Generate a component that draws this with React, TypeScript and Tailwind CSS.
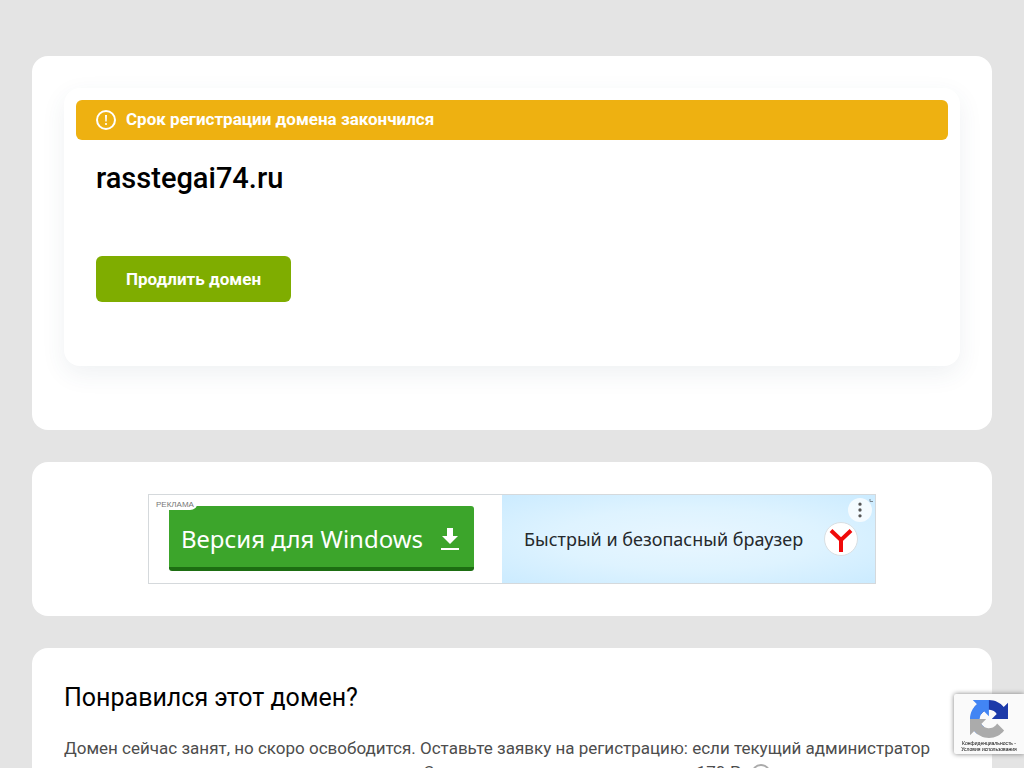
import { MoreVertical } from "lucide-react";

function AlertIcon() {
  return (
    <svg className="w-5 h-5 shrink-0" viewBox="0 0 20 20" fill="none" aria-hidden="true">
      <circle cx="10" cy="10" r="9" stroke="#fff" strokeWidth="2" />
      <path d="M9 5h2l-.3 6.5H9.3z" fill="#fff" />
      <circle cx="10" cy="14" r="1.1" fill="#fff" />
    </svg>
  );
}

function DomainCard() {
  return (
    <section className="bg-white rounded-2xl px-8 pt-8 pb-16">
      <div className="rounded-2xl p-3 pb-16 bg-white shadow-[0_8px_24px_rgba(54,79,99,0.08)]">
        <div className="flex items-center gap-2.5 h-10 px-5 rounded-md bg-[#eeb111] text-white text-[17px] font-bold">
          <AlertIcon />
          <span>Срок регистрации домена закончился</span>
        </div>
        <div className="px-5 pt-5">
          <h1 className="text-[29px] leading-9 font-medium text-black">
            rasstegai74.ru
          </h1>
          <button
            type="button"
            className="mt-15 h-[46px] px-[30px] pt-0.5 rounded-md bg-[#7fad00] text-white text-[17px] font-bold"
          >
            Продлить домен
          </button>
        </div>
      </div>
    </section>
  );
}

function BrowserLogo() {
  return (
    <svg className="w-9 h-9 shrink-0" viewBox="0 0 36 36" aria-hidden="true">
      <circle cx="18" cy="18" r="16.5" fill="#fff" stroke="#d9dfe3" strokeWidth="1" />
      <path d="M8 9.500 18 19 28 9.500M18 18v13" fill="none" stroke="#f00a0a" strokeWidth="4" />
    </svg>
  );
}

function Banner() {
  return (
    <section className="bg-white rounded-2xl p-8">
      <div className="relative flex h-[90px] max-w-[728px] mx-auto border border-[#d5d9dc] font-['Noto_Sans',sans-serif]">
        <div className="flex-1 min-w-0 pl-5 pr-7 pt-[11px]">
          <a
            href="#download"
            className="flex items-center justify-between h-[65px] pt-1 pl-3 pr-3.5 rounded-[3px] border-b-4 border-[#1d6e12] bg-[#3ca52b] text-white text-[24px] whitespace-nowrap"
          >
            Версия для Windows
            <svg className="w-5 h-6 shrink-0" viewBox="0 0 20 24" fill="#fff" aria-hidden="true">
              <path d="M7 1h6v8h5l-8 8-8-8h5zM1 21h18v2H1z" />
            </svg>
          </a>
        </div>
        <div className="flex items-center justify-between shrink-0 w-[373px] pl-[22px] pr-4 bg-[radial-gradient(ellipse_at_center,#e8f6ff_0%,#def3ff_50%,#cbebff_100%)] text-[#25292c] text-[18px] whitespace-nowrap">
          Быстрый и безопасный браузер
          <BrowserLogo />
        </div>
        <span className="absolute top-1 left-0 pl-[7px] pr-1 rounded-br-lg bg-white text-[8px] leading-[11px] text-[#777] font-['Liberation_Sans',sans-serif]">
          РЕКЛАМА
        </span>
        <button
          type="button"
          aria-label="Меню"
          className="absolute top-[3px] right-[3px] w-6 h-6 rounded-full bg-white/75 flex items-center justify-center text-[#555]"
        >
          <MoreVertical size={20} strokeWidth={2} />
        </button>
        <svg className="absolute top-1 right-0.5 w-1 h-1" viewBox="0 0 4 4" aria-hidden="true">
          <path d="M1 0v2.500h3" fill="none" stroke="#7b8790" />
        </svg>
      </div>
    </section>
  );
}

function HelpIcon() {
  return (
    <svg className="inline-block w-5 h-5 ml-1.5" viewBox="0 0 20 20" fill="none" aria-hidden="true">
      <circle cx="10" cy="10" r="9" stroke="#aaa" strokeWidth="2" />
      <path d="M7.500 8a2.500 2.500 0 1 1 3.500 2.300c-.7.3-1 .7-1 1.500" stroke="#aaa" strokeWidth="1.500" />
      <circle cx="10" cy="14.500" r="1" fill="#aaa" />
    </svg>
  );
}

function RequestCard() {
  return (
    <section className="bg-white rounded-2xl p-8">
      <h2 className="text-[25px] leading-9 text-black">Понравился этот домен?</h2>
      <p className="mt-5 text-[17px] leading-6 text-[#4d4d4d]">
        Домен сейчас занят, но скоро освободится. Оставьте заявку на
        регистрацию: если текущий администратор не&nbsp;продлит его, домен
        сможет стать вашим. Стоимость регистрации составит 170&nbsp;₽.
        <HelpIcon />
      </p>
    </section>
  );
}

function RecaptchaBadge() {
  return (
    <div className="fixed right-0 bottom-3.5 w-[70px] h-[60px] rounded-l-[2px] bg-[#fafafa] shadow-[0_0_5px_gray] flex flex-col items-center pt-1.5 font-['Liberation_Sans',sans-serif]">
      <svg className="w-[38px] h-[38px] shrink-0" viewBox="0 0 64 64" aria-hidden="true">
        <path
          fill="#1c3aa9"
          d="M64 31.955l-.033-1.370V4.687l-7.160 7.160C50.948 4.674 42.033.093 32.050.093c-10.400 0-19.620 4.960-25.458 12.645l11.736 11.860a15.550 15.550 0 0 1 4.754-5.334c2.050-1.600 4.952-2.906 8.968-2.906.485 0 .860.057 1.135.163 4.976.393 9.288 3.140 11.828 7.124l-8.307 8.307L64 31.953"
        />
        <path
          fill="#4285f4"
          d="M31.862.094l-1.370.033H4.594l7.160 7.160C4.580 13.147 0 22.062 0 32.045c0 10.400 4.960 19.620 12.645 25.458L24.506 45.767a15.550 15.550 0 0 1-5.334-4.754c-1.600-2.050-2.906-4.952-2.906-8.968 0-.485.057-.860.163-1.135.393-4.976 3.140-9.288 7.124-11.828l8.307 8.307L31.860.095"
        />
        <path
          fill="#ababab"
          d="M.001 32.045l.033 1.370v25.898l7.160-7.160c5.860 7.173 14.774 11.754 24.757 11.754 10.400 0 19.620-4.960 25.458-12.645L45.673 39.402a15.550 15.550 0 0 1-4.754 5.334c-2.050 1.600-4.952 2.906-8.968 2.906-.485 0-.860-.057-1.135-.163-4.976-.393-9.288-3.140-11.828-7.124l8.307-8.307L0 32.047"
        />
      </svg>
      <span className="mt-0.5 text-[5px] leading-[6px] text-center text-black whitespace-nowrap">
        <a href="#privacy">Конфиденциальность</a> -
        <br />
        <a href="#terms">Условия использования</a>
      </span>
    </div>
  );
}

export default function App() {
  return (
    <div className="min-h-screen bg-[#e4e4e4] px-8 pt-14 pb-8 font-[Roboto,sans-serif]">
      <main className="flex flex-col gap-8">
        <DomainCard />
        <Banner />
        <RequestCard />
      </main>
      <RecaptchaBadge />
    </div>
  );
}
